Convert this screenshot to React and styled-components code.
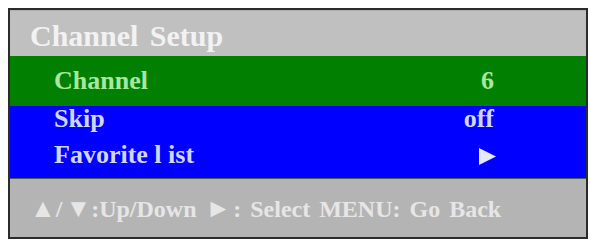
import styled, { createGlobalStyle } from "styled-components";

const GlobalStyle = createGlobalStyle`
  html, body {
    margin: 0;
    padding: 0;
    background: #ffffff;
  }
`;

const Page = styled.div`
  padding: 8px 0 0 8px;
`;

const Frame = styled.div`
  width: 576px;
  border: 2px solid #2b2b2b;
  font-family: "Liberation Serif", "Times New Roman", serif;
  font-weight: bold;
`;

const Header = styled.div`
  height: 46px;
  box-sizing: border-box;
  padding: 10px 0 0 20px;
  background: #c0c0c0;
  color: #f2f2f2;
  font-size: 30px;
  line-height: 30px;
  word-spacing: 4px;
  border-top: 1px solid #b0b0b0;
`;

const Section = styled.div`
  background: ${(p) => p.$bg};
  color: ${(p) => p.$fg};
  padding-top: ${(p) => p.$pad || 0}px;
  height: ${(p) => p.$height}px;
  box-sizing: border-box;
`;

const Row = styled.div`
  display: flex;
  justify-content: space-between;
  align-items: flex-start;
  height: 36px;
  padding: 0 92px 0 44px;
  font-size: 26px;
  line-height: 25px;
`;

const Value = styled.span`
  text-align: right;
`;

const ArrowIcon = styled.svg`
  display: block;
  margin: 5px -3px 0 0;
`;

const Footer = styled.div`
  height: 59px;
  box-sizing: border-box;
  padding: 19px 0 0 20px;
  background: #b4b4b4;
  color: #e6e6e6;
  border-top: 1px solid #555;
  font-size: 24px;
  line-height: 22px;
  word-spacing: 3px;
  white-space: nowrap;
`;

const Sym = styled.span`
  font-size: 26px;
  line-height: 0;
  margin: 0 ${(p) => p.$right ?? 0}px 0 ${(p) => p.$left ?? 0}px;
`;

const Play = () => (
  <ArrowIcon width="19" height="19" viewBox="0 0 19 19">
    <polygon points="1,1 18,9.5 1,18" fill="#e4e8ff" />
  </ArrowIcon>
);

const rows = [
  { label: "Skip", value: "off" },
  { label: "Favorite l ist", value: <Play /> },
];

export default function App() {
  return (
    <Page>
      <GlobalStyle />
      <Frame>
        <Header>Channel Setup</Header>
        <Section $bg="#007f00" $fg="#a6e8a0" $pad={12} $height={50}>
          <Row>
            <span>Channel</span>
            <Value>6</Value>
          </Row>
        </Section>
        <Section $bg="#0000ff" $fg="#d0d6ff" $height={72}>
          {rows.map((r) => (
            <Row key={r.label}>
              <span>{r.label}</span>
              <Value>{r.value}</Value>
            </Row>
          ))}
        </Section>
        <Footer>
          <Sym>▲</Sym>/<Sym $left={3}>▼</Sym>:Up/Down{" "}
          <Sym $right={2}>►</Sym>: Select MENU: Go Back
        </Footer>
      </Frame>
    </Page>
  );
}
